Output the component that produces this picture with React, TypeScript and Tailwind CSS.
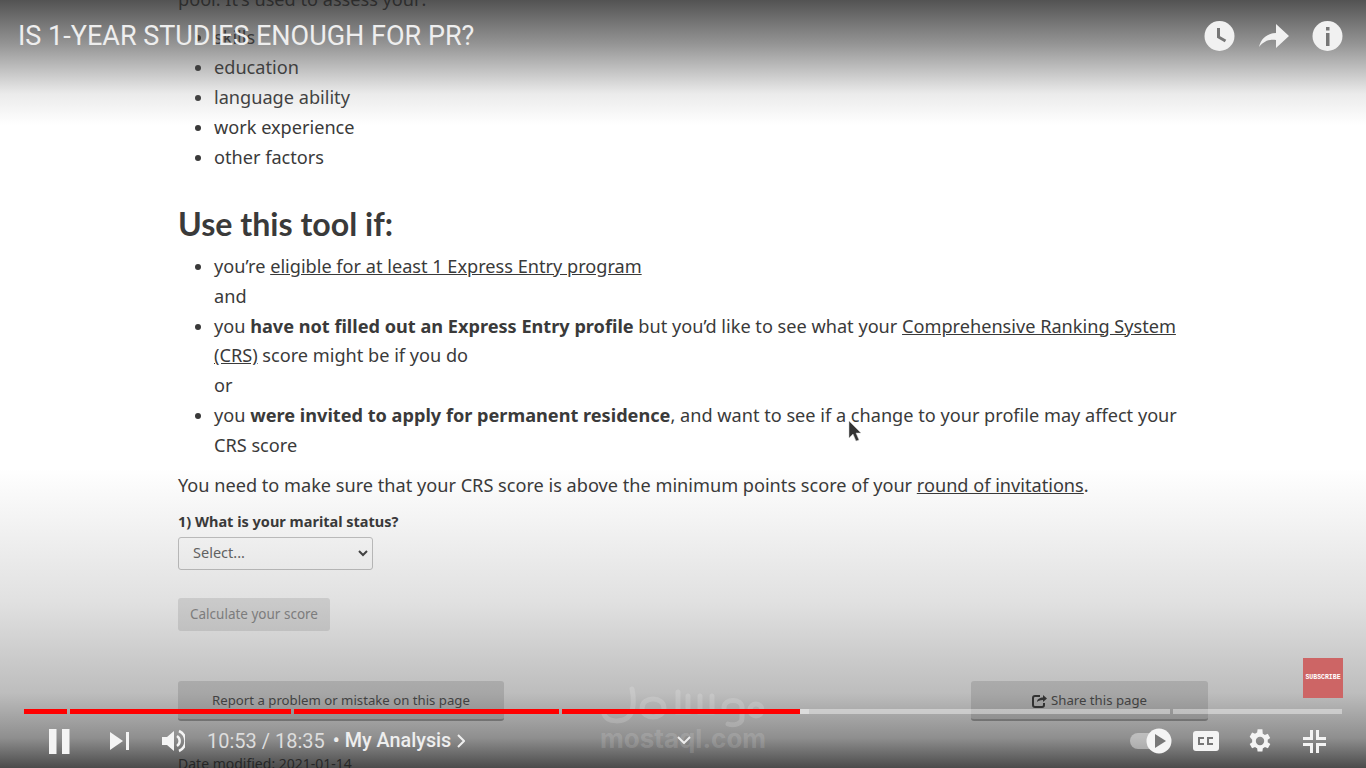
import React from "react";

const listItem = "pl-0 leading-[29.800px]";

function ProgressBar() {
  const played = [43, 221, 265, 197, 38];
  return (
    <div className="absolute left-[24px] top-[709px] flex h-[5px] w-[1318px] gap-[3px]">
      {played.map((w, i) => (
        <div key={i} className={i === 4 ? "-ml-[3px] bg-[#f00]" : "bg-[#f00]"} style={{ width: i === 4 ? w + 3 : w }} />
      ))}
      <div className="-ml-[3px] flex w-[370px]">
        <div className="w-[9px] bg-[#dcdcdc]" />
        <div className="w-[361px] bg-white/40" />
      </div>
      <div className="w-[169px] bg-white/40" />
    </div>
  );
}

function WatermarkLogo() {
  return (
    <svg className="absolute left-[600px] top-[684px]" width="166" height="44" viewBox="0 0 166 44" fill="none" stroke="rgba(255,255,255,0.16)" strokeWidth="5" strokeLinecap="round">
      <path d="M4 30c3 9 20 9 26 1 4-6 4-18 2-26" />
      <path d="M42 24c0-12 22-12 22 0s-22 12-22 0z" />
      <path d="M78 8v20h10V12M100 12v16h12V12M124 24c0-10 18-10 18 0v10c0 6-8 8-14 6" />
      <path d="M150 26c0-8 12-8 12 0s-12 8-12 0z" />
    </svg>
  );
}

export default function App() {
  return (
    <div className="relative h-[768px] w-[1366px] overflow-hidden bg-white font-['Noto_Sans',sans-serif] text-[18.150px] text-[#3a3a3a]">
      {/* page behind the video chrome */}
      <div className="-mt-[3px] pl-[178px] pr-[180px]">
        <p className="-mt-[16px] leading-[30px]">pool. It’s used to assess your:</p>
        <ul className="mt-[8px] list-disc pl-[36px]">
          <li className="pl-0 leading-[30px]">skills</li>
          <li className="pl-0 leading-[30px]">education</li>
          <li className="pl-0 leading-[30px]">language ability</li>
          <li className="pl-0 leading-[30px]">work experience</li>
          <li className="pl-0 leading-[30px]">other factors</li>
        </ul>
        <h2 className="mt-[32px] font-['Lato',sans-serif] text-[32.150px] font-bold leading-[40px]">Use this tool if:</h2>
        <ul className="mt-[8px] list-disc pl-[36px]">
          <li className={listItem}>
            you’re <span className="underline">eligible for at least 1 Express Entry program</span>
            <br />
            and
          </li>
          <li className={listItem}>
            you <b>have not filled out an Express Entry profile</b> but you’d like to see what your{" "}
            <span className="underline">Comprehensive Ranking System (CRS)</span> score might be if you do
            <br />
            or
          </li>
          <li className={listItem}>
            you <b>were invited to apply for permanent residence</b>, and want to see if a change to your profile may affect your CRS score
          </li>
        </ul>
        <p className="mt-[9px] leading-[30px]">
          You need to make sure that your CRS score is above the minimum points score of your <span className="underline">round of invitations</span>.
        </p>
        <p className="mt-[11px] text-[14.500px] font-bold leading-[20px]">1) What is your marital status?</p>
        <div className="mt-[6px] flex h-[33px] w-[195px] items-center justify-between rounded-[3px] border border-[#c4c4c4] pl-[14px] pr-[4px] text-[14.500px] text-[#666]">
          <span>Select...</span>
          <svg width="10" height="8" viewBox="0 0 10 8" fill="none" stroke="#444" strokeWidth="2"><path d="M1 2l4 4 4-4" /></svg>
        </div>
        <div className="mt-[28px] flex h-[33px] w-[152px] items-center justify-center rounded-[3px] bg-[#e4e4e4] text-[13.500px] text-[#8c8c8c]">Calculate your score</div>
        <div className="mt-[50px] flex justify-between text-[13.200px] text-[#4a4a4a]">
          <div className="flex h-[40px] w-[326px] items-center justify-center rounded-[3px] border-b-2 border-[#aaa] bg-[#dedede] pt-[2px]">Report a problem or mistake on this page</div>
          <div className="mr-[-22px] flex h-[40px] w-[237px] items-center justify-center gap-[4px] rounded-[3px] border-b-2 border-[#aaa] bg-[#dedede] pt-[2px]">
            <svg width="15" height="14" viewBox="0 0 15 14" fill="none" stroke="#333" strokeWidth="2"><path d="M8 2H3a2 2 0 0 0-2 2v7a2 2 0 0 0 2 2h7a2 2 0 0 0 2-2V9" /><path d="M5 8c0-3 3-4.500 6-4.500V1l4 3.500L11 8V6c-3 0-5 1-6 2z" fill="#333" stroke="none" /></svg>
            Share this page
          </div>
        </div>
        <p className="mt-[33px] text-[14px] leading-[20px]">Date modified: 2021-01-14</p>
      </div>

      {/* scrims */}
      <div className="pointer-events-none absolute inset-x-0 top-0 h-[125px] bg-[linear-gradient(to_bottom,rgba(40,40,40,0.8),rgba(60,60,60,0.55)_35%,rgba(120,120,120,0.15)_75%,rgba(255,255,255,0))]" />
      <div className="pointer-events-none absolute inset-x-0 bottom-0 h-[300px] bg-[linear-gradient(to_top,rgba(30,30,30,0.8),rgba(50,50,50,0.55)_10%,rgba(50,50,50,0.32)_25%,rgba(50,50,50,0.15)_55%,rgba(50,50,50,0))]" />

      {/* top chrome */}
      <div className="absolute left-[18px] top-[19px] font-['Roboto',sans-serif] text-[27px] leading-[34px] text-[#eee]">IS 1-YEAR STUDIES ENOUGH FOR PR?</div>
      <div className="absolute right-[23px] top-[21px] flex items-center gap-[23px]">
        <svg width="31" height="30" viewBox="0 0 30 30"><circle cx="15" cy="15" r="15" fill="#f1f1f1" /><path d="M14 7v9l7 4" fill="none" stroke="#777" strokeWidth="3" /></svg>
        <svg width="31" height="30" viewBox="0 0 31 30"><path d="M1 26c2-9 9-14 17-14V3l13 12-13 12v-8C11 18 6 20 1 26z" fill="#f1f1f1" /></svg>
        <svg width="31" height="30" viewBox="0 0 30 30"><circle cx="15" cy="15" r="15" fill="#f1f1f1" /><rect x="13.500" y="6" width="3.500" height="3.500" fill="#777" /><rect x="13.500" y="12" width="3.500" height="13" fill="#777" /></svg>
      </div>

      {/* cursor */}
      <svg className="absolute left-[847px] top-[420px]" width="16" height="24" viewBox="0 0 16 24"><path d="M2 1l0 17 4-4 3 7 3-1-3-7 5 0z" fill="#333" stroke="#ccc" strokeWidth="0.500" /></svg>

      {/* subscribe */}
      <div className="absolute left-[1303px] top-[658px] flex h-[40px] w-[40px] items-center justify-center bg-[#cd6565] font-['Liberation_Mono',monospace] text-[6.500px] font-bold text-white">SUBSCRIBE</div>

      <WatermarkLogo />
      <ProgressBar />
      <div className="absolute left-[600px] top-[724px] font-['Inter',sans-serif] text-[26px] font-bold leading-[30px] text-white/15">mostaql.com</div>

      {/* controls */}
      <div className="absolute inset-x-0 top-[726px] flex h-[30px] items-center pl-[49px] text-white">
        <svg width="21" height="25" viewBox="0 0 21 25" fill="#f4f4f4"><rect width="7.500" height="25" /><rect x="13" width="7.500" height="25" /></svg>
        <svg className="ml-[40px]" width="19" height="18" viewBox="0 0 19 18" fill="#f4f4f4"><path d="M0 0l13 9-13 9z" /><rect x="16" width="3" height="18" /></svg>
        <svg className="ml-[33px]" width="23" height="24" viewBox="0 0 23 24"><path d="M0 8h5l7-6v20l-7-6H0z" fill="#f4f4f4" /><path d="M15 7a6 6 0 0 1 0 10" fill="none" stroke="#f4f4f4" strokeWidth="2.500" /><path d="M17 2a11 11 0 0 1 0 20" fill="none" stroke="#f4f4f4" strokeWidth="2.500" /></svg>
        <div className="ml-[22px] font-['Roboto',sans-serif] text-[20px] leading-[30px] text-[#ddd]">10:53 / 18:35</div>
        <span className="ml-[8px] font-['Roboto',sans-serif] text-[19.800px] font-medium text-[#eee]">• My Analysis</span>
        <svg className="ml-[6px]" width="8" height="14" viewBox="0 0 8 14" fill="none" stroke="#eee" strokeWidth="2"><path d="M1 1l6 6-6 6" /></svg>
        <svg className="ml-[212px] -mt-[3px]" width="14" height="8" viewBox="0 0 14 8" fill="none" stroke="#eee" strokeWidth="2"><path d="M1 1l6 6 6-6" /></svg>
        <div className="ml-auto flex items-center pr-[40px]">
          <div className="relative mr-[21px] h-[30px] w-[42px]">
            <div className="absolute left-0 top-[7px] h-[16px] w-[36px] rounded-full bg-white/40" />
            <svg className="absolute right-0 top-[2px]" width="26" height="26" viewBox="0 0 26 26"><circle cx="13" cy="13" r="12.500" fill="#f4f4f4" /><path d="M9 6l11 7-11 7z" fill="#777" /></svg>
          </div>
          <svg width="26" height="22" viewBox="0 0 26 22"><rect width="26" height="20" y="1" rx="3" fill="#f4f4f4" /><path d="M11 8H6v6h5M20 8h-5v6h5" fill="none" stroke="#777" strokeWidth="2" /></svg>
          <svg className="ml-[30px]" width="22" height="24" viewBox="4 2 18 20" fill="#f4f4f4"><path d="M19.400 13a7.600 7.600 0 0 0 0-2l2.100-1.600-2-3.500-2.500 1a7.500 7.500 0 0 0-1.700-1L15 2.300h-4l-.4 2.600a7.500 7.500 0 0 0-1.700 1l-2.500-1-2 3.500L6.500 11a7.600 7.600 0 0 0 0 2l-2.100 1.600 2 3.500 2.500-1a7.500 7.500 0 0 0 1.700 1l.4 2.600h4l.4-2.600a7.500 7.500 0 0 0 1.700-1l2.500 1 2-3.500zM13 15.500a3.500 3.500 0 1 1 0-7 3.500 3.500 0 0 1 0 7z" /></svg>
          <svg className="ml-[32px]" width="23" height="23" viewBox="0 0 23 23" fill="none" stroke="#f4f4f4" strokeWidth="3"><path d="M8.500 0v8.500H0M14.500 0v8.500H23M8.500 23v-8.500H0M14.500 23v-8.500H23" /></svg>
        </div>
      </div>
    </div>
  );
}
